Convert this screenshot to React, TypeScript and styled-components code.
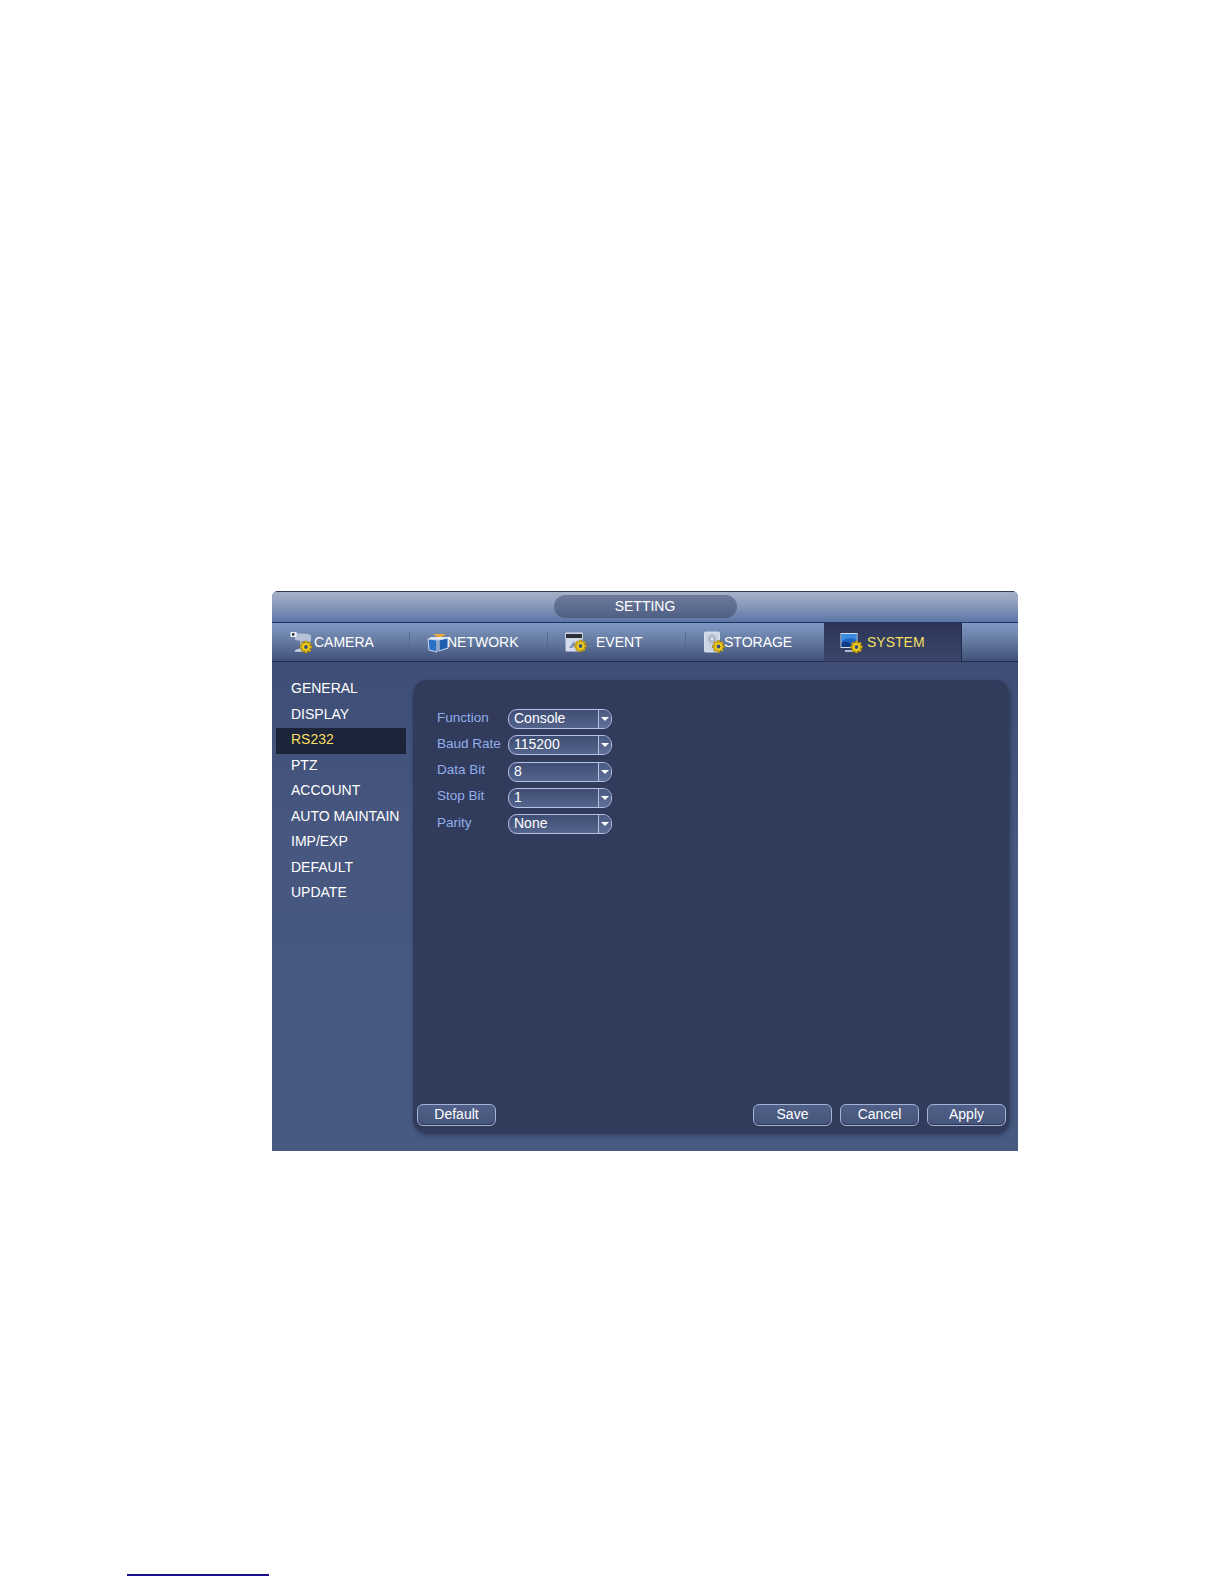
import React from 'react';
import styled, { createGlobalStyle } from 'styled-components';

const GlobalStyle = createGlobalStyle`
    html, body {
        margin: 0;
        padding: 0;
        background: #ffffff;
    }
    body {
        font-family: "Liberation Sans", Arial, sans-serif;
    }
`;

const Gear = ({ x, y }: { x: number; y: number }) => (
    <g transform={`translate(${x} ${y})`}>
        <g fill="#e2b90e" stroke="#7d6205" strokeWidth="0.4">
            {[0, 45, 90, 135].map((angle) => (
                <rect key={angle} x="-1.4" y="-6" width="2.8" height="12" transform={`rotate(${angle})`} />
            ))}
            <circle r="4.4" fill="#f2cf1d" />
        </g>
        <circle r="1.9" fill="#3d4f78" />
    </g>
);

const CameraIcon = () => (
    <svg width="24" height="24" viewBox="0 0 24 24">
        <path d="M5 3 L18 4 Q21 4 21 7 L21 10 Q21 12 18 12 L5 10 Z" fill="#b4c1d9" />
        <rect x="0.5" y="2" width="6" height="5" fill="#f4f4f4" />
        <rect x="2" y="3.2" width="2.4" height="2.4" fill="#1d2438" />
        <path d="M11 11 L11 19 L5 21 L14 21" fill="none" stroke="#cfd8e8" strokeWidth="1.4" />
        <Gear x={16} y={17} />
    </svg>
);

const NetworkIcon = () => (
    <svg width="24" height="24" viewBox="0 0 24 24">
        <path d="M6 4 L19 4 L15 7 L10 7 Z" fill="#e8a83a" />
        <path d="M1 9 L4 7 L22 7 L22 8 L12 10 Z" fill="#dfe8f4" />
        <path d="M1 9 L10 10 L10 22 L2 20 Z" fill="#2a70c4" stroke="#dbe6f4" strokeWidth="0.9" />
        <path d="M12 10 L21 8 L21 18 L12 21 Z" fill="#1f5eb0" stroke="#dbe6f4" strokeWidth="0.9" />
    </svg>
);

const EventIcon = () => (
    <svg width="24" height="24" viewBox="0 0 24 24">
        <rect x="1.5" y="2.5" width="17" height="19" rx="1" fill="#d5dced" />
        <rect x="1.5" y="3.5" width="17" height="5" fill="#2b2f38" stroke="#dfe5f0" strokeWidth="0.8" />
        <path d="M5 18 L10 11 L11 15 L8 18 Z" fill="#7f93b8" />
        <Gear x={16.5} y={16} />
    </svg>
);

const StorageIcon = () => (
    <svg width="24" height="24" viewBox="0 0 24 24">
        <rect x="0.5" y="2" width="15" height="20" rx="1" fill="#ccd5e4" stroke="#e9edf4" strokeWidth="0.8" />
        <circle cx="8" cy="9" r="4.4" fill="#aeb8ca" />
        <circle cx="8" cy="9" r="1.3" fill="#e6ebf3" />
        <Gear x={14.5} y={16.5} />
    </svg>
);

const SystemIcon = () => (
    <svg width="24" height="24" viewBox="0 0 24 24">
        <rect x="0.5" y="3" width="17" height="15" fill="#d5e0f0" />
        <rect x="1.5" y="4" width="15" height="13" fill="#1f62c0" />
        <path d="M1.5 11 Q9 6 16.5 10 L16.5 4 L1.5 4 Z" fill="#3a8be0" />
        <path d="M1.5 17 L1.5 13 Q8 9 13 17 Z" fill="#0e3a86" />
        <path d="M5 21 L15 21" stroke="#d5e0f0" strokeWidth="1.4" />
        <Gear x={16.5} y={17} />
    </svg>
);

const tabs = [
    { label: 'CAMERA', icon: <CameraIcon />, iconLeft: 18, gap: 0 },
    { label: 'NETWORK', icon: <NetworkIcon />, iconLeft: 17, gap: -4 },
    { label: 'EVENT', icon: <EventIcon />, iconLeft: 16, gap: 8 },
    { label: 'STORAGE', icon: <StorageIcon />, iconLeft: 18, gap: -4 },
    { label: 'SYSTEM', icon: <SystemIcon />, iconLeft: 16, gap: 3, active: true },
];

const menuItems = ['GENERAL', 'DISPLAY', 'RS232', 'PTZ', 'ACCOUNT', 'AUTO MAINTAIN', 'IMP/EXP', 'DEFAULT', 'UPDATE'];

const fields = [
    { label: 'Function', value: 'Console' },
    { label: 'Baud Rate', value: '115200' },
    { label: 'Data Bit', value: '8' },
    { label: 'Stop Bit', value: '1' },
    { label: 'Parity', value: 'None' },
];

export default function App() {
    return (
        <Page>
            <GlobalStyle />
            <Window>
                <TitleBar>
                    <TitlePill>SETTING</TitlePill>
                </TitleBar>
                <TabBar>
                    {tabs.map((tab) => (
                        <Tab key={tab.label} active={!!tab.active} iconLeft={tab.iconLeft}>
                            {tab.icon}
                            <TabLabel gap={tab.gap}>{tab.label}</TabLabel>
                        </Tab>
                    ))}
                    <TabFiller />
                </TabBar>
                <Body>
                    <SideMenu>
                        {menuItems.map((item) => (
                            <MenuItem key={item} active={item === 'RS232'}>
                                {item}
                            </MenuItem>
                        ))}
                    </SideMenu>
                    <Panel>
                        <Form>
                            {fields.map((field) => (
                                <Row key={field.label}>
                                    <FieldLabel>{field.label}</FieldLabel>
                                    <Select>
                                        <SelectValue>{field.value}</SelectValue>
                                        <SelectArrow />
                                    </Select>
                                </Row>
                            ))}
                        </Form>
                        <Actions>
                            <ActionButton>Default</ActionButton>
                            <RightActions>
                                <ActionButton>Save</ActionButton>
                                <ActionButton>Cancel</ActionButton>
                                <ActionButton>Apply</ActionButton>
                            </RightActions>
                        </Actions>
                    </Panel>
                </Body>
            </Window>
            <FootnoteRule />
        </Page>
    );
}

const Page = styled.div`
    width: 1224px;
    height: 1584px;
    padding-top: 591px;
    box-sizing: border-box;
    overflow: hidden;
    background: #ffffff;
`;

const Window = styled.div`
    width: 746px;
    height: 560px;
    margin-left: 272px;
    display: flex;
    flex-direction: column;
    background: linear-gradient(180deg, #3b4a72 0%, #47577f 45%, #475a82 100%);
    border-radius: 6px 6px 0 0;
    overflow: hidden;
`;

const TitleBar = styled.div`
    height: 32px;
    flex: none;
    display: flex;
    justify-content: center;
    padding-top: 3px;
    box-sizing: border-box;
    background: linear-gradient(180deg, #a6b0c9 0%, #8e9cbc 40%, #5b76a6 100%);
    border-top: 1px solid #2e3a58;
    border-bottom: 1px solid #1d3260;
`;

const TitlePill = styled.div`
    width: 183px;
    height: 23px;
    border-radius: 12px;
    background: linear-gradient(180deg, #6d7b9b 0%, #4f5f85 100%);
    color: #ffffff;
    font-size: 14px;
    line-height: 23px;
    text-align: center;
`;

const TabBar = styled.div`
    height: 39px;
    flex: none;
    display: flex;
`;

const Tab = styled.div<{ active: boolean; iconLeft: number }>`
    width: ${({ active }) => (active ? 137 : 138)}px;
    flex: none;
    display: flex;
    align-items: center;
    box-sizing: border-box;
    padding-left: ${({ iconLeft }) => iconLeft}px;
    color: ${({ active }) => (active ? '#f6df63' : '#ffffff')};
    font-size: 14px;
    background: ${({ active }) =>
        active
            ? 'linear-gradient(180deg, #2c3558 0%, #3a4669 100%)'
            : 'linear-gradient(180deg, #7f98c4 0%, #64799f 50%, #3f5079 100%)'};
    border-bottom: 1px solid ${({ active }) => (active ? 'transparent' : '#1f2c50')};
    position: relative;
    &:not(:nth-child(4)):not(:nth-child(5))::after {
        content: '';
        position: absolute;
        right: 0;
        top: 9px;
        bottom: 9px;
        width: 1px;
        background: #55688f;
    }
`;

const TabLabel = styled.span<{ gap: number }>`
    margin-left: ${({ gap }) => gap}px;
`;

const TabFiller = styled.div`
    flex: 1;
    box-sizing: border-box;
    border-left: 1px solid #1f2c50;
    border-bottom: 1px solid #1f2c50;
    background: linear-gradient(180deg, #7f98c4 0%, #64799f 50%, #3f5079 100%);
`;

const Body = styled.div`
    flex: 1;
    display: flex;
    min-height: 0;
    padding: 18px 9px 18px 4px;
`;

const SideMenu = styled.div`
    width: 130px;
    flex: none;
    margin: -3px 7px 0 0;
    display: flex;
    flex-direction: column;
`;

const MenuItem = styled.div<{ active: boolean }>`
    height: 25.55px;
    line-height: 23px;
    padding-left: 15px;
    font-size: 14px;
    white-space: nowrap;
    color: ${({ active }) => (active ? '#f6df63' : '#ffffff')};
    background: ${({ active }) => (active ? '#1b2438' : 'transparent')};
`;

const Panel = styled.div`
    flex: 1;
    display: flex;
    flex-direction: column;
    justify-content: space-between;
    background: #313b5c;
    border-radius: 14px;
    box-shadow: 1px 2px 4px rgba(30, 38, 65, 0.65);
    padding: 29px 3px 7px 4px;
`;

const Form = styled.div`
    display: flex;
    flex-direction: column;
    gap: 6.25px;
    padding-left: 20px;
`;

const Row = styled.div`
    display: flex;
    align-items: center;
    height: 20px;
`;

const FieldLabel = styled.div`
    width: 71px;
    flex: none;
    margin-top: -4px;
    font-size: 13.5px;
    color: #93aeea;
    white-space: nowrap;
`;

const Select = styled.div`
    width: 104px;
    height: 20px;
    box-sizing: border-box;
    display: flex;
    border: 1px solid #b3c1e2;
    border-radius: 9px;
    background: linear-gradient(180deg, #3f4d74 0%, #54648c 100%);
    overflow: hidden;
`;

const SelectValue = styled.div`
    flex: 1;
    padding-left: 5px;
    font-size: 14px;
    line-height: 17px;
    color: #ffffff;
`;

const SelectArrow = styled.div`
    width: 13px;
    flex: none;
    box-sizing: border-box;
    border-left: 1px solid #b3c1e2;
    display: flex;
    align-items: center;
    justify-content: center;
    background: linear-gradient(180deg, #4a5a82 0%, #5f6f97 100%);
    &::before {
        content: '';
        margin-right: 1px;
        border-left: 4px solid transparent;
        border-right: 4px solid transparent;
        border-top: 4px solid #ffffff;
    }
`;

const Actions = styled.div`
    display: flex;
    justify-content: space-between;
`;

const RightActions = styled.div`
    display: flex;
    gap: 8px;
`;

const ActionButton = styled.div`
    width: 79px;
    height: 22px;
    box-sizing: border-box;
    border: 1px solid #a3b2d6;
    border-radius: 6px;
    background: linear-gradient(180deg, #4f5f87 0%, #46557c 100%);
    box-shadow: inset 0 -1px 0 #2a3350;
    color: #ffffff;
    font-size: 14px;
    line-height: 19px;
    text-align: center;
`;

const FootnoteRule = styled.div`
    width: 142px;
    height: 2px;
    margin: 423px 0 0 127px;
    background: #1a0f8a;
`;
